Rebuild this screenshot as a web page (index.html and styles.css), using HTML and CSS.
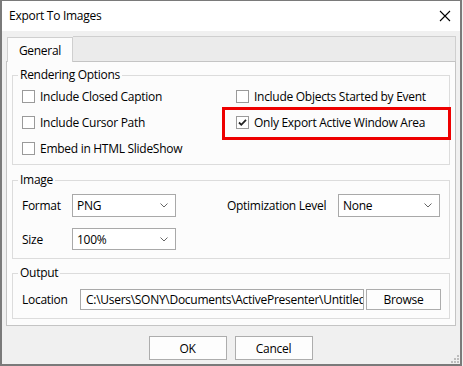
FILE: index.html
```html
<!DOCTYPE html>
<html>
<head>
<meta charset="utf-8">
<link rel="stylesheet" href="styles.css">
</head>
<body>
<div class="window">
  <div class="titlebar">
    <span class="title">Export To Images</span>
    <svg class="close" width="12" height="12" viewBox="0 0 12 12"><path d="M1 1 L11 11 M11 1 L1 11" stroke="#000" stroke-width="1.1" fill="none"/></svg>
  </div>
  <div class="content">
    <div class="tabs">
      <div class="tab">General</div>
      <div class="tab-fill"></div>
    </div>
    <div class="page">
      <div class="group g-render">
        <div class="legend">Rendering Options</div>
        <div class="check-grid">
          <label class="chk"><span class="box"></span>Include Closed Caption</label>
          <label class="chk"><span class="box"></span>Include Objects Started by Event</label>
          <label class="chk"><span class="box"></span>Include Cursor Path</label>
          <label class="chk highlight"><span class="box"><svg width="11" height="11" viewBox="0 0 11 11"><path d="M2 5.5 L4.3 7.8 L9 2.8" stroke="#222" stroke-width="1.8" fill="none"/></svg></span>Only Export Active Window Area</label>
          <label class="chk"><span class="box"></span>Embed in HTML SlideShow</label>
        </div>
      </div>
      <div class="group g-image">
        <div class="legend">Image</div>
        <div class="image-grid">
          <span class="lbl">Format</span>
          <div class="select"><span>PNG</span><svg width="8" height="5" viewBox="0 0 8 5"><path d="M0.5 0.5 L4 4 L7.5 0.5" stroke="#666" fill="none"/></svg></div>
          <span></span>
          <span class="lbl">Optimization Level</span>
          <div class="select"><span>None</span><svg width="8" height="5" viewBox="0 0 8 5"><path d="M0.5 0.5 L4 4 L7.5 0.5" stroke="#666" fill="none"/></svg></div>
          <span class="lbl">Size</span>
          <div class="select"><span>100%</span><svg width="8" height="5" viewBox="0 0 8 5"><path d="M0.5 0.5 L4 4 L7.5 0.5" stroke="#666" fill="none"/></svg></div>
        </div>
      </div>
      <div class="group g-output">
        <div class="legend">Output</div>
        <div class="output-row">
          <span class="lbl loc">Location</span>
          <div class="input">C:\Users\SONY\Documents\ActivePresenter\Untitled</div>
          <div class="btn browse">Browse</div>
        </div>
      </div>
    </div>
    <div class="footer">
      <div class="btn dlg">OK</div>
      <div class="btn dlg">Cancel</div>
    </div>
    <div class="grip">
      <i class="d3 r1"></i>
      <i class="d2 r2"></i><i class="d3 r2"></i>
      <i class="d1 r3"></i><i class="d2 r3"></i><i class="d3 r3"></i>
    </div>
  </div>
</div>
</body>
</html>
```
FILE: styles.css
```css
*, *::before, *::after { box-sizing: border-box; }
html, body { margin: 0; padding: 0; background: #f0f0f0; }
body {
  font-family: "Open Sans", "Noto Sans", sans-serif;
  font-size: 12px;
  letter-spacing: -0.28px;
  color: #000;
}
.window {
  width: 462px;
  height: 366px;
  border: 2px solid #7a7a7a;
  border-top: 1px solid #7a7a7a;
  display: flex;
  flex-direction: column;
  background: #f0f0f0;
}
.titlebar {
  height: 30px;
  background: #fff;
  display: flex;
  align-items: center;
  justify-content: space-between;
  padding: 0 9px 0 7px;
  flex: none;
}
.title { font-size: 12px; line-height: 16px; }
.close { margin-top: -1px; }
.content {
  position: relative;
  flex: 1;
  padding: 5px 4px 0 4px;
  display: flex;
  flex-direction: column;
}
.tabs {
  display: flex;
  height: 25px;
  padding-left: 1px;
}
.tab {
  width: 66px;
  background: #fcfcfc;
  border: 1px solid #cfcfcf;
  border-bottom: none;
  display: flex;
  align-items: center;
  justify-content: center;
  position: relative;
  top: 1px;
  z-index: 1;
  height: 25px;
  padding-top: 1px;
}
.tab-fill {
  flex: 1;
  background: #ebebeb;
  border: 1px solid #cfcfcf;
  border-left: none;
  border-bottom: none;
}
.page {
  background: #fcfcfc;
  border: 1px solid #c4c4c4;
  height: 265px;
  padding: 5px 5px 0 5px;
  display: flex;
  flex-direction: column;
}
.group {
  border: 1px solid #dcdcdc;
  padding: 0 8px 0 8px;
  flex: none;
}
.legend {
  display: block;
  width: max-content;
  background: #fcfcfc;
  padding: 0 2px;
  margin: -9px 0 0 -3px;
  line-height: 16px;
  height: 16px;
}
.g-render { height: 90px; margin-top: 8px; }
.check-grid {
  display: grid;
  grid-template-columns: 214px 1fr;
  grid-auto-rows: 26px;
  padding-left: 1px;
}
.chk {
  display: flex;
  align-items: center;
  gap: 5px;
  white-space: nowrap;
  position: relative;
}
.box {
  width: 13px;
  height: 13px;
  border: 1px solid #9a9a9a;
  background: #fff;
  display: flex;
  align-items: center;
  justify-content: center;
  flex: none;
}
.highlight::after {
  content: "";
  position: absolute;
  left: -14px;
  top: -2px;
  width: 229px;
  height: 33px;
  border: 3px solid #ee0000;
}
.g-image { height: 79px; margin-top: 15px; }
.image-grid {
  display: grid;
  grid-template-columns: 50px 104px 51px 111px 102px;
  grid-template-rows: 23px 22px;
  row-gap: 11px;
  align-items: center;
  margin-top: 6px;
  padding-left: 1px;
}
.select {
  height: 100%;
  border: 1px solid #a9a9a9;
  background: #fff;
  display: flex;
  align-items: center;
  justify-content: space-between;
  padding: 0 7px 0 4px;
}
.g-output { height: 46px; margin-top: 14px; }
.output-row {
  display: flex;
  align-items: center;
  margin-top: 8px;
  padding-left: 1px;
}
.loc { width: 58px; }
.input {
  width: 284px;
  height: 21px;
  border: 1px solid #a9a9a9;
  background: #fff;
  padding: 0 0 0 5px;
  line-height: 19px;
  white-space: nowrap;
  overflow: hidden;
}
.btn {
  border: 1px solid #adadad;
  background: #fdfdfd;
  display: flex;
  align-items: center;
  justify-content: center;
}
.browse { width: 75px; height: 21px; margin-left: 2px; }
.footer {
  display: flex;
  justify-content: center;
  gap: 8px;
  margin-top: 10px;
  padding-right: 1px;
}
.dlg { width: 78px; height: 24px; }
.grip {
  position: absolute;
  right: 1px;
  bottom: 1px;
  display: grid;
  grid-template-columns: repeat(3, 2px);
  grid-template-rows: repeat(3, 2px);
  gap: 1px;
}
.grip i { background: #bdbdbd; display: block; }
.d1 { grid-column: 1; } .d2 { grid-column: 2; } .d3 { grid-column: 3; }
.r1 { grid-row: 1; } .r2 { grid-row: 2; } .r3 { grid-row: 3; }
```
